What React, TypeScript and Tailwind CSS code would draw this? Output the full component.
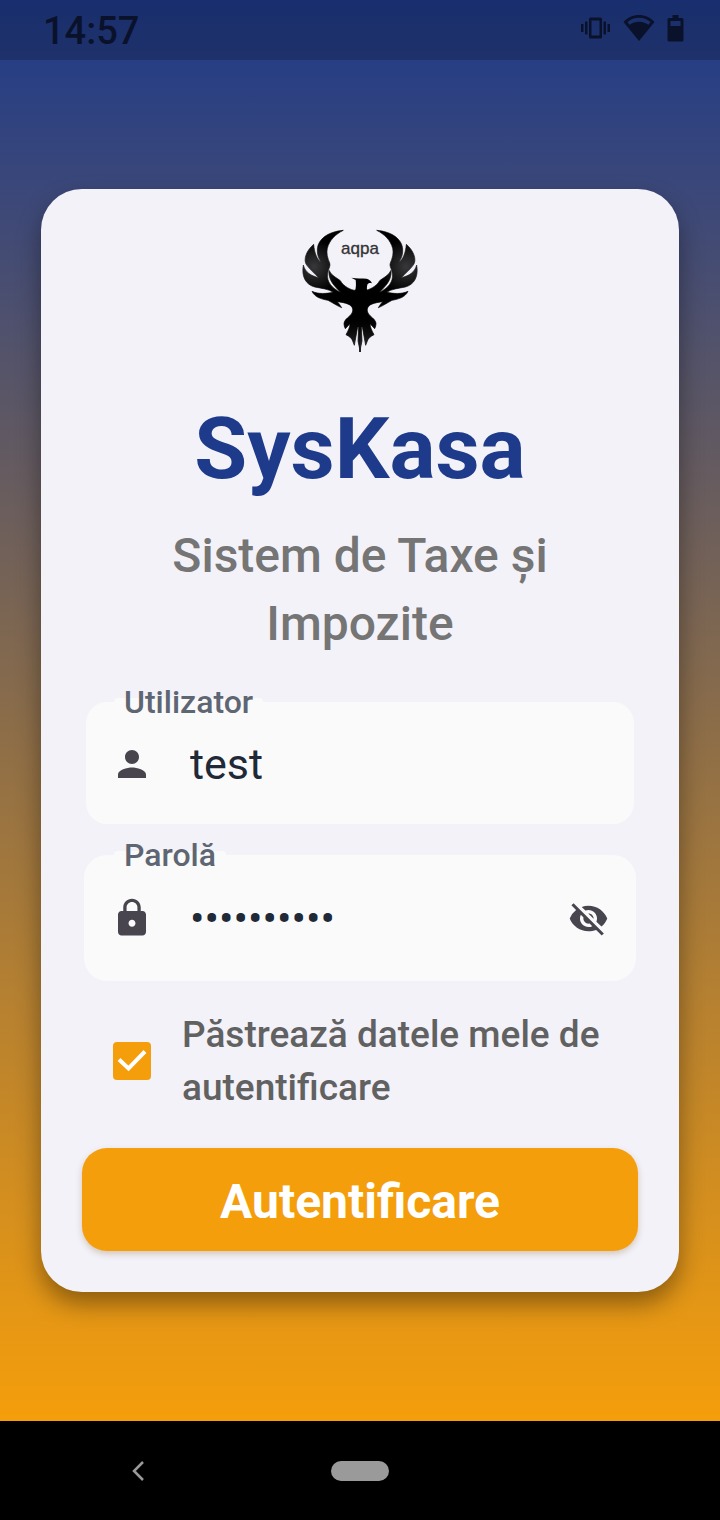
import { useState } from 'react';
import { MdLock, MdPerson, MdVisibility, MdVisibilityOff } from 'react-icons/md';

const WING =
  'M160 46 C112 50 84 74 82 102 C81 120 86 130 93 142 C80 132 73 112 71 88 C50 106 38 134 50 150 C60 164 72 174 86 188 C62 182 46 172 40 150 C34 184 46 208 74 216 C94 220 116 222 130 232 C108 236 86 238 66 229 C74 246 92 252 114 256 C126 262 140 272 155 278 C150 270 146 264 142 260 C158 262 176 266 182 272 C189 278 190 286 186 294 C180 306 165 310 162 324 C162 330 163 336 166 341 L180 326 C180 336 174 348 168 359 C178 364 186 370 188 378 L193 391 L203 336 L206 336 L204 378 L211 411 L211 222 L196 226 C184 226 160 214 151 197 C140 188 124 182 117 166 C114 196 134 214 152 232 C126 220 109 200 113 176 C114 162 123 154 119 144 C112 128 109 114 112 100 C118 76 136 58 160 46 Z';

function Logo() {
  return (
    <svg viewBox="0 0 420 450" className="h-[150px] w-[140px]" role="img" aria-label="aqpa">
      <defs>
        <radialGradient id="feather" gradientUnits="userSpaceOnUse" cx="72" cy="155" r="80">
          <stop offset="0" stopColor="#38383a" />
          <stop offset="1" stopColor="#000" />
        </radialGradient>
        <linearGradient id="tail" x1="0" y1="0" x2="0" y2="1">
          <stop offset="0.7" stopColor="#000" stopOpacity="0" />
          <stop offset="1" stopColor="#555" stopOpacity="0.7" />
        </linearGradient>
      </defs>
      <path d={WING} fill="url(#feather)" stroke="url(#feather)" strokeWidth="2" strokeLinejoin="round" />
      <path d={WING} fill="url(#tail)" />
      <g transform="translate(420 0) scale(-1 1)">
        <path d={WING} fill="url(#feather)" stroke="url(#feather)" strokeWidth="2" strokeLinejoin="round" />
        <path d={WING} fill="url(#tail)" />
      </g>
      <path d="M184 188 C200 190 216 190 230 191 C238 194 243 198 246 205 C240 203 234 204 232 209 C230 218 230 224 233 230 L233 250 L190 250 L194 230 C199 218 198 206 197 195 Z" />
      <text x="210" y="117" textAnchor="middle" fontSize="51" fill="#333336" stroke="#333336" strokeWidth="1" className="font-['Liberation_Sans',sans-serif]">
        aqpa
      </text>
    </svg>
  );
}

function StatusBar() {
  return (
    <header className="flex h-[60px] shrink-0 items-center justify-between bg-black/20 pr-9 pl-[43px] text-[#0a122b]">
      <time className="pt-0.5 text-[38px] leading-[60px] font-medium">14:57</time>
      <div className="flex items-center gap-3 pb-1">
        <svg viewBox="0 0 30 24" className="h-6 w-[30px]" fill="currentColor" aria-hidden="true">
          <path fillRule="evenodd" d="M9.500 1.500h10a1.500 1.500 0 0 1 1.500 1.500v18a1.500 1.500 0 0 1-1.500 1.500h-10A1.500 1.500 0 0 1 8 21V3a1.500 1.500 0 0 1 1.500-1.500zM10.500 4.500v15h8v-15z" />
          <path d="M4 5.500h2.500v13H4zM0 8h2.500v8H0zM22.500 5.500H25v13h-2.500zM26.500 8H29v8h-2.500z" />
        </svg>
        <svg viewBox="0 0 32 28" className="h-7 w-8" fill="currentColor" aria-hidden="true">
          <path fillRule="evenodd" d="M16 1C10 1 4.500 3.300.500 8L16 27 31.500 8C27.500 3.300 22 1 16 1zm0 2.800c4.500 0 8.200 1.400 11.500 4.300L25.500 10.800C22.500 8.700 19.500 7.700 16 7.700S9.500 8.700 6.500 10.800L4.500 8.100C7.800 5.200 11.500 3.800 16 3.800z" />
        </svg>
        <svg viewBox="0 0 17 28" className="h-7 w-[17px]" fill="currentColor" aria-hidden="true">
          <path fillRule="evenodd" d="M5.500 1h6v3H15a1.500 1.500 0 0 1 1.500 1.500v20.500a1.500 1.500 0 0 1-1.500 1.500H2A1.500 1.500 0 0 1 .500 26V5.500A1.500 1.500 0 0 1 2 4h3.500zM3.500 7v5h10V7z" />
        </svg>
      </div>
    </header>
  );
}

const LABEL =
  'absolute -top-4 px-2.5 text-[32px] leading-8 font-medium text-[#5f6673] before:absolute before:inset-x-0 before:top-3 before:-z-10 before:h-3 before:rounded-t before:bg-[#fafafa]';
const INPUT =
  'min-w-0 flex-1 bg-transparent text-[43px] leading-[52px] text-[#1f2937] outline-none';

export default function App() {
  const [user, setUser] = useState('test');
  const [password, setPassword] = useState('parola1234');
  const [visible, setVisible] = useState(false);
  const [keep, setKeep] = useState(true);

  return (
    <div className="flex min-h-screen flex-col bg-black font-[Roboto,sans-serif]">
      <div className="flex flex-1 flex-col bg-linear-to-b/srgb from-[#1e3a8a] to-[#f59e0b]">
        <StatusBar />
        <main className="flex flex-1 items-center px-[41px]">
          <form
            onSubmit={(e) => e.preventDefault()}
            className="flex w-full flex-col rounded-[41px] bg-[#f3f2f9] px-[41px] pt-[26px] pb-[41px] shadow-[0_12px_24px_rgba(0,0,0,0.38)]"
          >
            <div className="flex justify-center">
              <Logo />
            </div>
            <h1 className="mt-[34px] text-center text-[86px] leading-[100px] font-bold text-[#1e3a8a]">SysKasa</h1>
            <p className="mx-auto mt-[23px] max-w-[440px] text-center text-[48px] leading-[68px] font-medium text-[#757575]">
              Sistem de Taxe și Impozite
            </p>

            <div className="relative isolate mx-1 mt-[44px] flex h-[122px] items-center gap-[37px] rounded-[21px] bg-[#fafafa] px-[25px] pt-0.5">
              <label htmlFor="user" className={`${LABEL} left-7`}>Utilizator</label>
              <MdPerson className="size-[42px] shrink-0 text-[#49454f]" aria-hidden="true" />
              <input id="user" value={user} onChange={(e) => setUser(e.target.value)} className={INPUT} />
            </div>

            <div className="relative isolate mx-0.5 mt-[31px] flex h-[126px] items-center gap-[37px] rounded-[23px] bg-[#fafafa] px-[27px]">
              <label htmlFor="password" className={`${LABEL} left-[30px]`}>Parolă</label>
              <MdLock className="size-[42px] shrink-0 text-[#49454f]" aria-hidden="true" />
              <input
                id="password"
                type={visible ? 'text' : 'password'}
                value={password}
                onChange={(e) => setPassword(e.target.value)}
                className={INPUT}
              />
              <button type="button" aria-label="Arată parola" onClick={() => setVisible(!visible)} className="shrink-0 text-[#49454f]">
                {visible ? <MdVisibility className="size-[41px]" /> : <MdVisibilityOff className="size-[41px]" />}
              </button>
            </div>

            <div className="mt-[27px] flex items-center gap-[31px] pl-[31px]">
              <span className="relative grid size-[38px] shrink-0 place-items-center">
                <input
                  id="keep"
                  type="checkbox"
                  checked={keep}
                  onChange={(e) => setKeep(e.target.checked)}
                  className="size-full appearance-none rounded border-4 border-[#f59e0b] checked:bg-[#f59e0b]"
                />
                {keep && (
                  <svg viewBox="0 0 38 38" className="pointer-events-none absolute inset-0 size-full" fill="none" stroke="#fff" strokeWidth="4" aria-hidden="true">
                    <path d="M6 17.500 15.500 26.500 32 9.500" />
                  </svg>
                )}
              </span>
              <label htmlFor="keep" className="text-[37px] leading-[53px] font-medium text-[#616161]">
                Păstrează datele mele de autentificare
              </label>
            </div>

            <button
              type="submit"
              className="mt-[34px] h-[103px] rounded-[25px] bg-[#f59e0b] pt-1 text-[48px] leading-[56px] font-bold text-white shadow-[0_3px_6px_rgba(120,70,0,0.25)]"
            >
              Autentificare
            </button>
          </form>
        </main>
      </div>

      <nav className="grid h-[99px] shrink-0 grid-cols-3 place-items-center bg-black">
        <button type="button" aria-label="Înapoi" className="ml-9">
          <svg viewBox="0 0 12 20" className="h-5 w-3" fill="none" stroke="#9a9a9a" strokeWidth="2.5" aria-hidden="true">
            <path d="M11 1 2 10l9 9" />
          </svg>
        </button>
        <button type="button" aria-label="Acasă" className="h-5 w-[58px] rounded-full bg-[#9a9a9a]" />
      </nav>
    </div>
  );
}
